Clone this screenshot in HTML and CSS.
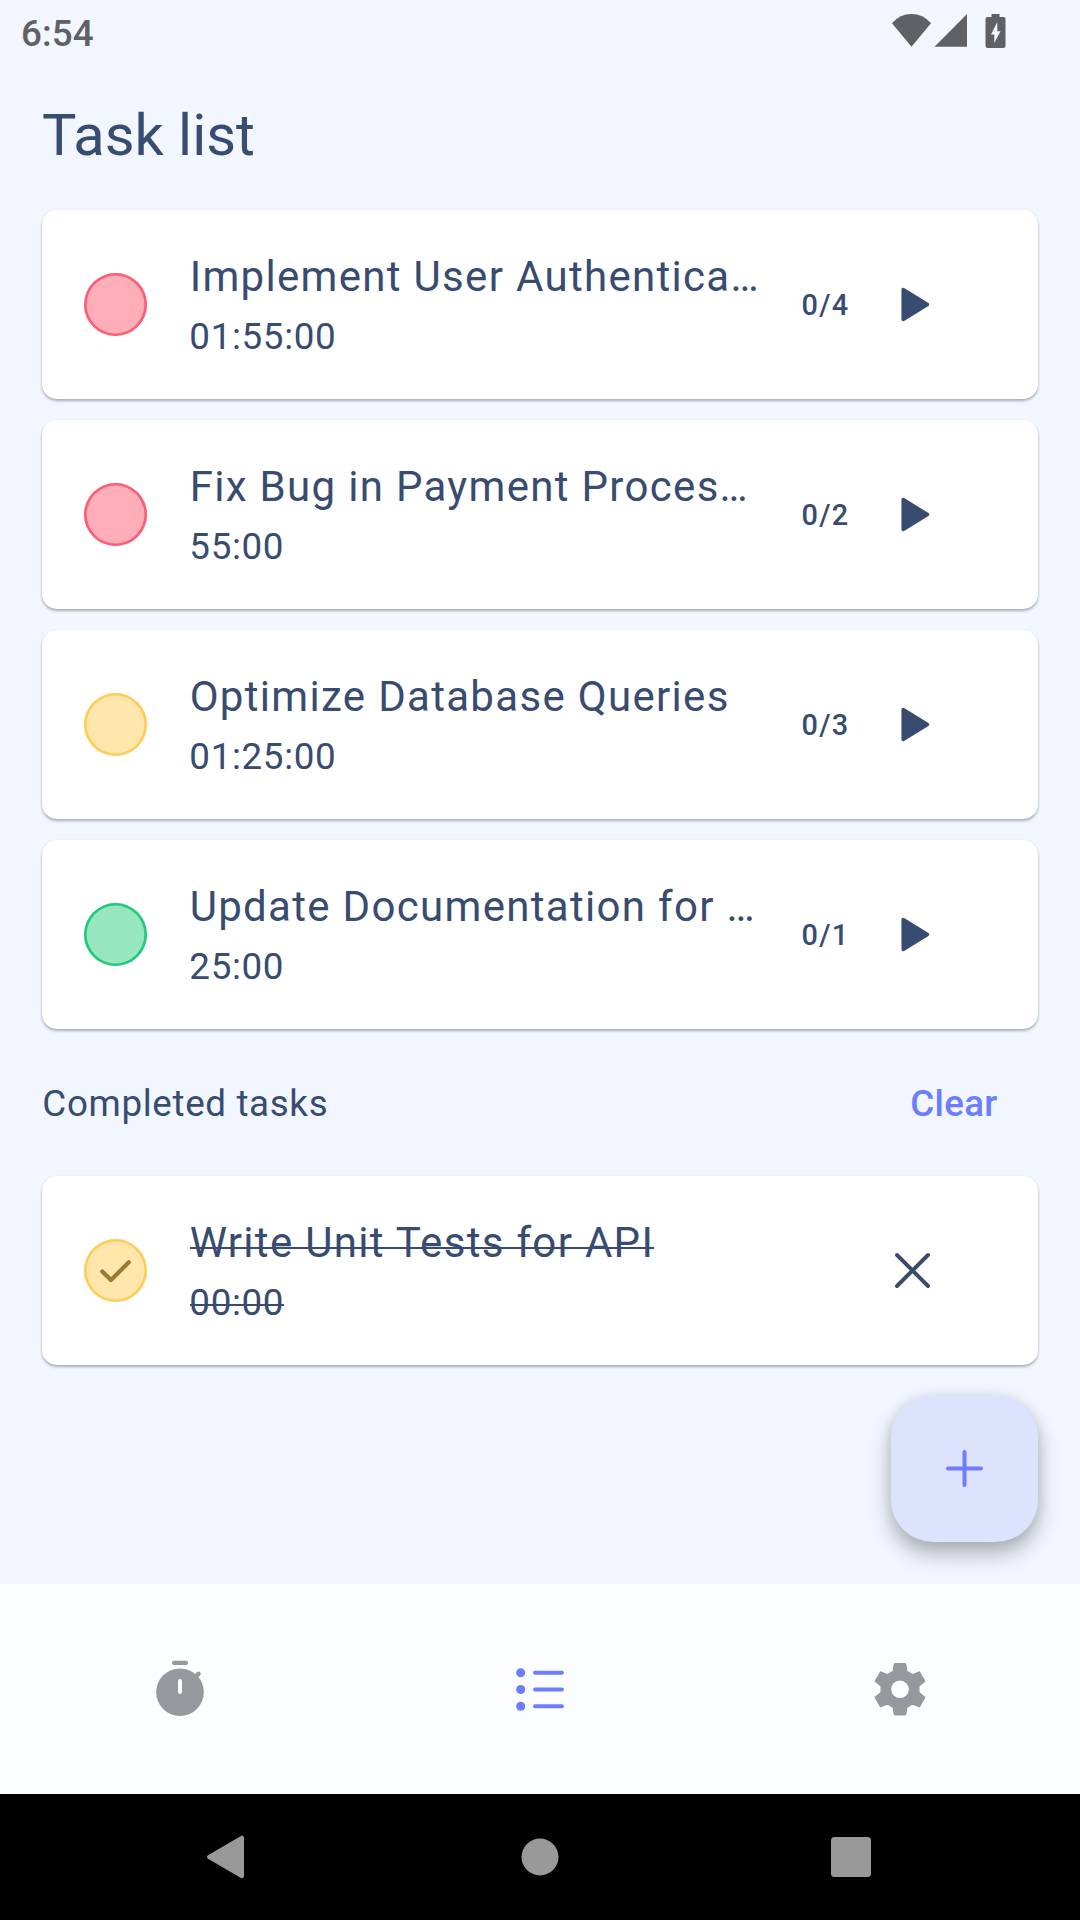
FILE: index.html
```html
<!DOCTYPE html>
<html lang="en">
<head>
<meta charset="utf-8">
<title>Task list</title>
<link rel="stylesheet" href="styles.css">
</head>
<body>
<div class="screen">
  <header class="status">
    <span class="clock">6:54</span>
    <svg class="status-icons" width="120" height="40" viewBox="0 0 120 40">
      <path d="M0 9.2Q8 0 19.500 0T39 9.200L19.500 32.700Z"/>
      <path d="M42.500 32.700L75 0v32.700Z"/>
      <path fill-rule="evenodd" d="M99.500 0h8v3h4q2 0 2 2v27q0 2-2 2H95.500q-2 0-2-2V5q0-2 2-2h4ZM105.300 8L99 20.500h3.300V29L108.500 17.300h-3.200Z"/>
    </svg>
  </header>
  <main class="content">
    <h1 class="title">Task list</h1>
    <section class="list">
      <article class="card">
        <span class="dot red"></span>
        <div class="text"><div class="name">Implement User Authentica…</div><div class="time">01:55:00</div></div>
        <span class="count">0/4</span>
        <svg class="action" viewBox="0 0 63 63"><path class="play" d="M22.200 16.500V46.500L46.500 31.500Z"/></svg>
      </article>
      <article class="card">
        <span class="dot red"></span>
        <div class="text"><div class="name">Fix Bug in Payment Proces…</div><div class="time">55:00</div></div>
        <span class="count">0/2</span>
        <svg class="action" viewBox="0 0 63 63"><path class="play" d="M22.200 16.500V46.500L46.500 31.500Z"/></svg>
      </article>
      <article class="card">
        <span class="dot yellow"></span>
        <div class="text"><div class="name">Optimize Database Queries</div><div class="time">01:25:00</div></div>
        <span class="count">0/3</span>
        <svg class="action" viewBox="0 0 63 63"><path class="play" d="M22.200 16.500V46.500L46.500 31.500Z"/></svg>
      </article>
      <article class="card">
        <span class="dot green"></span>
        <div class="text"><div class="name">Update Documentation for …</div><div class="time">25:00</div></div>
        <span class="count">0/1</span>
        <svg class="action" viewBox="0 0 63 63"><path class="play" d="M22.200 16.500V46.500L46.500 31.500Z"/></svg>
      </article>
    </section>
    <div class="section-head">
      <span class="section-title">Completed tasks</span>
      <span class="clear">Clear</span>
    </div>
    <article class="card done">
      <span class="dot yellow"><svg class="check" viewBox="0 0 63 63"><path d="M18.300 32.500L27 41L44.800 23.300"/></svg></span>
      <div class="text"><div class="name">Write Unit Tests for API</div><div class="time">00:00</div></div>
      <svg class="action" viewBox="0 0 63 63"><path class="cross" d="M16 16L47 47M47 16L16 47"/></svg>
    </article>
    <div class="fab"><svg width="63" height="63" viewBox="0 0 63 63"><path d="M31.500 15v33M15 31.500h33"/></svg></div>
  </main>
  <nav class="tabs">
    <svg class="tab" viewBox="-50 -50 100 100">
      <path class="fill" d="M-6-29.200H6a2 2 0 0 1 0 4.200H-6a2 2 0 0 1 0-4.200Z"/>
      <circle class="fill" cy="2.200" r="23.800"/>
      <path class="knob" d="M14.500-12.200L18.500-16.200"/>
      <path class="hand" d="M0-9V2"/>
    </svg>
    <svg class="tab" viewBox="-50 -50 100 100">
      <g class="bullet"><circle cx="-19.300" cy="-17.300" r="4.500"/><circle cx="-19.300" cy="-.5" r="4.500"/><circle cx="-19.300" cy="16.200" r="4.500"/></g>
      <path class="lines" d="M-5-17.300H22M-5-.5H22M-5 16.200H22"/>
    </svg>
    <svg class="tab" viewBox="-50 -50 100 100">
      <g transform="translate(0 -.7)">
        <path class="gear" d="M-5-25L5-25L6.500-17.400L12.500-13.900L19.150-16.800L24.150-8.200L18.300-3.500L18.300 3.500L24.150 8.200L19.150 16.800L12.500 13.900L6.500 17.400L5 25L-5 25L-6.500 17.400L-12.500 13.900L-19.150 16.800L-24.150 8.200L-18.300 3.500L-18.300-3.500L-24.150-8.200L-19.150-16.800L-12.500-13.900L-6.500-17.400Z"/>
        <circle class="hole" r="8.800"/>
      </g>
    </svg>
  </nav>
  <footer class="system">
    <svg width="1080" height="126" viewBox="0 0 1080 126">
      <path class="back" d="M209 63L242 43.700V82.300Z"/>
      <circle cx="540" cy="63" r="18.500"/>
      <rect x="831" y="43" width="40" height="40" rx="3.500"/>
    </svg>
  </footer>
</div>
</body>
</html>
```
FILE: styles.css
```css
* { box-sizing: border-box; }
body {
  margin: 0;
  background: #f1f6ff;
  color: #384b70;
  font-family: Roboto, "Liberation Sans", sans-serif;
}
svg { display: block; flex: none; }
.screen {
  width: 1080px;
  height: 1920px;
  display: flex;
  flex-direction: column;
  overflow: hidden;
}
.status {
  height: 63px;
  display: flex;
  justify-content: space-between;
  padding: 0 68px 0 21px;
  color: #606164;
}
.clock { font-size: 36.75px; font-weight: 500; line-height: 68px; letter-spacing: .1px; }
.status-icons { margin-top: 14px; fill: #606164; }
.content {
  height: 1521px;
  display: flex;
  flex-direction: column;
  padding: 0 42px;
}
.title {
  margin: 0;
  height: 147px;
  font-size: 57.75px;
  font-weight: 400;
  line-height: 144px;
}
.list { display: flex; flex-direction: column; gap: 21px; }
.card {
  height: 189px;
  display: flex;
  align-items: center;
  padding: 0 94.5px 0 42px;
  background: #fff;
  border-radius: 15px;
  box-shadow: 0 2px 3px rgba(0, 0, 0, .27), 0 1px 3px rgba(0, 0, 0, .06);
}
.dot {
  width: 63px;
  height: 63px;
  flex: none;
  border-radius: 50%;
}
.red { background: #ffadb9; box-shadow: inset 0 0 0 2.6px #ff5c75; }
.yellow { background: #ffe6ad; box-shadow: inset 0 0 0 2.6px #ffcd57; }
.green { background: #96e6bf; box-shadow: inset 0 0 0 2.6px #22c97b; }
.text {
  flex: 1;
  align-self: stretch;
  margin-left: 42px;
  padding-top: 37px;
  white-space: nowrap;
}
.name {
  padding-left: .65px;
  font-size: 42px;
  line-height: 60px;
  letter-spacing: 1.3125px;
}
.time {
  margin-top: 3px;
  padding-left: .35px;
  font-size: 36.75px;
  line-height: 53px;
  letter-spacing: .656px;
}
.count {
  width: 79px;
  font-size: 28.875px;
  font-weight: 500;
  letter-spacing: 1.3125px;
}
.action { width: 63px; height: 63px; }
.play {
  fill: #384b70;
  stroke: #384b70;
  stroke-width: 3.5;
  stroke-linejoin: round;
}
.cross, .check path, .fab path {
  fill: none;
  stroke: #384b70;
  stroke-width: 3.9;
  stroke-linecap: round;
  stroke-linejoin: round;
}
.check path { stroke: #9a7b34; stroke-width: 4.2; }
/* Strike line sits slightly lower than the browser's line-through */
.done .name, .done .time {
  width: max-content;
  background: linear-gradient(#384b70, #384b70) 1px 34px / 100% 2px no-repeat;
}
.done .time { background-position: 1px 28px; }
.section-head {
  height: 147px;
  display: flex;
  justify-content: space-between;
  padding-right: 40.5px;
  font-size: 36.75px;
  line-height: 149px;
}
.section-title { padding-left: .35px; letter-spacing: .656px; }
.clear { color: #6d7dff; font-weight: 500; letter-spacing: .26px; }
.fab {
  width: 147px;
  height: 147px;
  margin: 30px 0 0 auto;
  display: grid;
  place-items: center;
  background: #dde2fd;
  border-radius: 42px;
  box-shadow: 0 12px 22px rgba(0, 0, 0, .27), 0 2px 14px rgba(0, 0, 0, .09);
}
.fab path { stroke: #6d7dff; stroke-width: 4; }
.tabs {
  position: relative;
  height: 210px;
  display: grid;
  grid-template-columns: repeat(3, 1fr);
  place-items: center;
  padding-top: 2px;
  background: #fcfdff;
}
.tab { width: 100px; height: 100px; }
.fill { fill: #97989d; }
.knob, .hand { stroke: #97989d; stroke-width: 4.5; stroke-linecap: round; }
.hand { stroke: #fcfdff; stroke-width: 4; }
.bullet { fill: #6d7dff; }
.lines { stroke: #6d7dff; stroke-width: 3.9; stroke-linecap: round; }
.gear { fill: #97989d; stroke: #97989d; stroke-width: 2.4; stroke-linejoin: round; }
.hole { fill: #fcfdff; }
.system { height: 126px; background: #000; }
.system svg { fill: #999; }
.back { stroke: #999; stroke-width: 4; stroke-linejoin: round; }
```
